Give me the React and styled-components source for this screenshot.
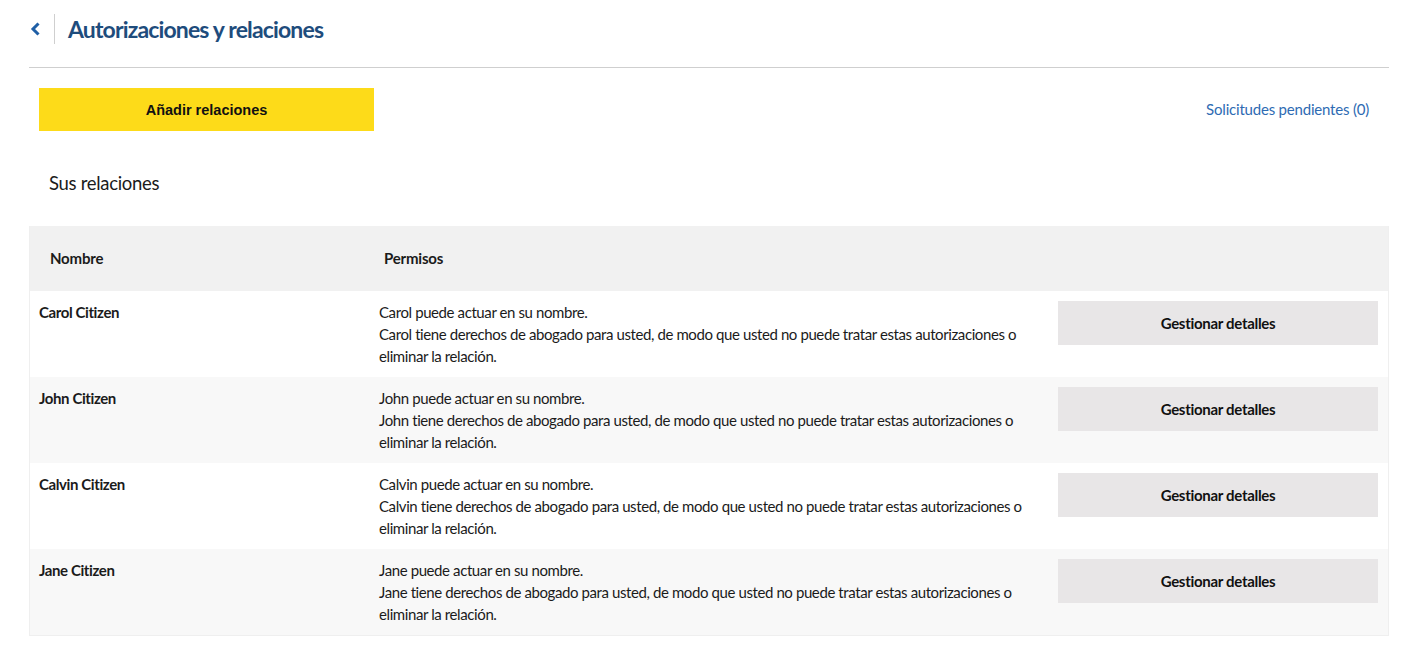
import React from "react";
import styled, { createGlobalStyle } from "styled-components";

const GlobalStyle = createGlobalStyle`
  body {
    margin: 0;
    background: #fff;
    font-family: Lato, "Open Sans", sans-serif;
    color: #1b1b1b;
  }
`;

const relations = [
  { name: "Carol Citizen", first: "Carol" },
  { name: "John Citizen", first: "John" },
  { name: "Calvin Citizen", first: "Calvin" },
  { name: "Jane Citizen", first: "Jane" },
];

export default function App() {
  return (
    <>
      <GlobalStyle />
      <Page>
        <Header>
          <BackButton aria-label="Volver">
            <svg width="11" height="14" viewBox="0 0 11 14">
              <path d="M8.5 1.5 L3 7 L8.5 12.5" fill="none" stroke="#1f5fa6" strokeWidth="3" />
            </svg>
          </BackButton>
          <Title>Autorizaciones y relaciones</Title>
        </Header>

        <Actions>
          <PrimaryButton>Añadir relaciones</PrimaryButton>
          <PendingLink href="#">Solicitudes pendientes (0)</PendingLink>
        </Actions>

        <SectionTitle>Sus relaciones</SectionTitle>

        <Table>
          <HeadRow>
            <HeadCell>Nombre</HeadCell>
            <HeadCell $second>Permisos</HeadCell>
          </HeadRow>
          {relations.map((r, i) => (
            <Row key={r.name} $striped={i % 2 === 1}>
              <NameCell>{r.name}</NameCell>
              <PermCell>
                <PermLine>{r.first} puede actuar en su nombre.</PermLine>
                <PermLine>
                  {r.first} tiene derechos de abogado para usted, de modo que usted no puede tratar estas autorizaciones o
                </PermLine>
                <PermLine>eliminar la relación.</PermLine>
              </PermCell>
              <ActionCell>
                <SecondaryButton>Gestionar detalles</SecondaryButton>
              </ActionCell>
            </Row>
          ))}
        </Table>
      </Page>
    </>
  );
}

const Page = styled.div`
  padding: 0 15px 0 29px;
  width: 1360px;
`;

const Header = styled.div`
  display: flex;
  align-items: center;
  height: 68px;
  border-bottom: 1px solid #cfcfcf;
  box-sizing: border-box;
  padding-bottom: 10px;
`;

const BackButton = styled.button`
  display: flex;
  align-items: center;
  justify-content: flex-start;
  width: 26px;
  height: 30px;
  padding: 0 0 0 1px;
  background: none;
  border: none;
  border-right: 1px solid #cfcfcf;
  cursor: pointer;
`;

const Title = styled.h1`
  margin: 0 0 0 13px;
  font-size: 23px;
  font-weight: 700;
  letter-spacing: -0.85px;
  color: #1e4c7c;
`;

const Actions = styled.div`
  display: flex;
  align-items: center;
  justify-content: space-between;
  padding: 20px 20px 0 10px;
`;

const PrimaryButton = styled.button`
  width: 335px;
  height: 43px;
  background: #fddb19;
  border: none;
  font-family: "Liberation Sans", Arial, sans-serif;
  font-weight: 700;
  font-size: 14.5px;
  color: #111;
  cursor: pointer;
`;

const PendingLink = styled.a`
  font-size: 15px;
  letter-spacing: -0.2px;
  color: #2e6bb3;
  text-decoration: none;
  margin-top: -1px;
`;

const SectionTitle = styled.h2`
  margin: 0;
  padding: 41px 0 0 20px;
  height: 54px;
  font-size: 18.5px;
  font-weight: 400;
  letter-spacing: -0.3px;
  color: #1b1b1b;
`;

const Table = styled.div`
  border: 1px solid #efefef;
  border-top: none;
`;

const HeadRow = styled.div`
  display: grid;
  grid-template-columns: 354px 1fr;
  height: 65px;
  align-items: center;
  background: #f1f1f1;
`;

const HeadCell = styled.div`
  padding-left: ${(p) => (p.$second ? "0" : "20px")};
  padding-bottom: 1px;
  font-size: 15px;
  font-weight: 700;
  letter-spacing: -0.2px;
`;

const Row = styled.div`
  display: grid;
  grid-template-columns: 349px 1fr 340px;
  height: 86px;
  background: ${(p) => (p.$striped ? "#f8f8f8" : "#fff")};
`;

const NameCell = styled.div`
  padding: 12px 0 0 9px;
  font-size: 15px;
  font-weight: 700;
  letter-spacing: -0.4px;
`;

const PermCell = styled.div`
  padding-top: 10px;
  font-size: 15px;
  line-height: 22px;
  letter-spacing: -0.4px;
  color: #1b1b1b;
`;

const PermLine = styled.div`
  white-space: nowrap;
`;

const ActionCell = styled.div`
  padding: 10px 10px 0 10px;
`;

const SecondaryButton = styled.button`
  width: 320px;
  height: 44px;
  background: #e8e6e7;
  border: none;
  font-family: Lato, sans-serif;
  font-size: 15px;
  font-weight: 700;
  letter-spacing: -0.3px;
  color: #111;
  cursor: pointer;
`;
